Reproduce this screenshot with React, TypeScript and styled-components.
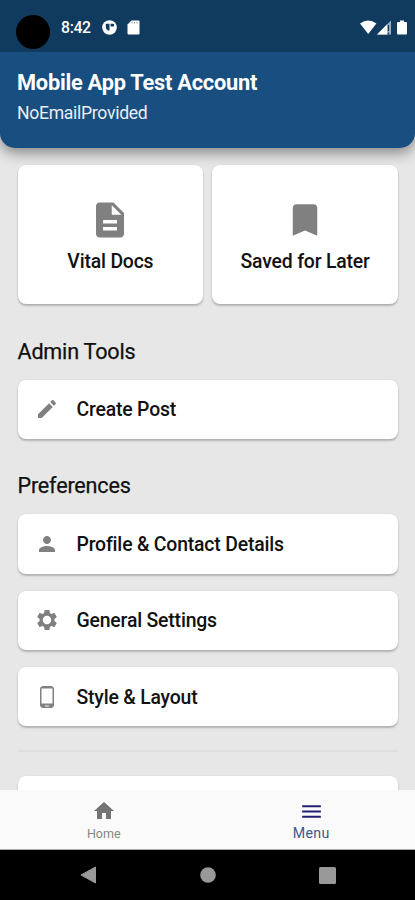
import React from "react";
import styled, { createGlobalStyle } from "styled-components";

const GlobalStyle = createGlobalStyle`
  * { box-sizing: border-box; }
  body { margin: 0; background: #e7e7e7; }
`;

const Screen = styled.div`
  width: 415px;
  height: 900px;
  display: flex;
  flex-direction: column;
  overflow: hidden;
  background: #e7e7e7;
  color: #111;
  font-family: Roboto, "Liberation Sans", sans-serif;
`;

const StatusBar = styled.div`
  flex: none;
  z-index: 2;
  height: 52px;
  display: flex;
  align-items: flex-start;
  padding: 15px 7px 0 16px;
  background: #113a5f;
  color: #fff;
`;

const Camera = styled.div`
  width: 34px;
  height: 34px;
  border-radius: 50%;
  background: #000;
`;

const Clock = styled.span`
  width: 41px;
  margin: 3px 0 0 11px;
  font-size: 15.8px;
  line-height: 20px;
  font-weight: 500;
  letter-spacing: -0.35px;
`;

const StatusIcons = styled.div<{ $gap: number; $end?: boolean }>`
  display: flex;
  align-items: center;
  gap: ${(p) => p.$gap}px;
  height: 16px;
  margin-top: 4px;
  margin-left: ${(p) => (p.$end ? "auto" : "0")};
`;

const Header = styled.header`
  flex: none;
  z-index: 1;
  height: 95.5px;
  padding: 18px 17px 0;
  border-radius: 0 0 15px 15px;
  background: #184e80;
  color: #fff;
  box-shadow: 0 5px 14px rgba(0, 0, 0, 0.42);
`;

const AccountName = styled.h1`
  margin: 0;
  font-size: 21.8px;
  line-height: 26px;
  font-weight: 700;
  letter-spacing: -0.25px;
`;

const AccountEmail = styled.p`
  margin: 6px 0 0;
  font-size: 17.6px;
  line-height: 22px;
  letter-spacing: -0.3px;
  color: #e9eff6;
`;

const Content = styled.main`
  flex: 1;
  min-height: 0;
  overflow: hidden;
  padding: 17.5px 17px 0 17.5px;
`;

const TileGrid = styled.div`
  display: grid;
  grid-template-columns: 1fr 1fr;
  gap: 9px;
`;

const Card = styled.div`
  border-radius: 8px;
  background: #fff;
  box-shadow: 0 2px 2px rgba(0, 0, 0, 0.22), 0 0 2px rgba(0, 0, 0, 0.08);
`;

const Tile = styled(Card)`
  height: 139px;
  display: flex;
  flex-direction: column;
  align-items: center;
  padding-top: 34px;
`;

const Label = styled.span`
  padding-top: 2px;
  font-size: 19.4px;
  line-height: 24px;
  font-weight: 500;
  letter-spacing: -0.18px;
`;

const TileLabel = styled(Label)`
  margin-top: 7px;
`;

const SectionTitle = styled.h2`
  height: 26px;
  margin: 34.5px 0 15px;
  font-size: 21.6px;
  line-height: 26px;
  font-weight: 400;
  letter-spacing: -0.2px;
  -webkit-text-stroke: 0.25px #111;
`;

const RowList = styled.div`
  display: flex;
  flex-direction: column;
  gap: 17px;
`;

const Row = styled(Card)`
  height: 59.3px;
  display: flex;
  align-items: center;
  gap: 17.5px;
  padding-left: 17.5px;
`;

const Divider = styled.hr`
  height: 2px;
  margin: 24px 0 24px;
  border: 0;
  background: #dfdfdf;
`;

const TabBar = styled.nav`
  flex: none;
  height: 60px;
  display: grid;
  grid-template-columns: 1fr 1fr;
  background: #fafafa;
  border-bottom: 1px solid #aaa;
  z-index: 1;
`;

const Tab = styled.div<{ $active?: boolean }>`
  display: flex;
  flex-direction: column;
  align-items: center;
  padding-top: 9px;
  color: ${(p) => (p.$active ? "#40568b" : "#858585")};
  font-size: ${(p) => (p.$active ? 14.2 : 12.5)}px;
  line-height: 18px;
`;

const TabLabel = styled.span<{ $active?: boolean }>`
  margin-top: ${(p) => (p.$active ? 0 : 2)}px;
  letter-spacing: ${(p) => (p.$active ? 0.3 : 0)}px;
`;

const SystemBar = styled.div`
  flex: none;
  height: 50px;
  display: flex;
  align-items: center;
  justify-content: center;
  gap: 103px;
  background: #000;
`;

const paths = {
  document:
    "M14 2H6c-1.1 0-1.99.9-1.99 2L4 20c0 1.1.89 2 1.99 2H18c1.1 0 2-.9 2-2V8l-6-6zm2 16H8v-2h8v2zm0-4H8v-2h8v2zm-3-5V3.500L18.500 9H13z",
  bookmark: "M17 3H7c-1.100 0-1.990.900-1.990 2L5 21l7-3 7 3V5c0-1.100-.900-2-2-2z",
  pencil:
    "M3 17.250V21h3.750L17.810 9.940l-3.750-3.750L3 17.250zM20.710 7.040c.390-.390.390-1.020 0-1.410l-2.340-2.340c-.390-.390-1.020-.390-1.410 0l-1.830 1.830 3.750 3.750 1.830-1.830z",
  person:
    "M12 12c2.210 0 4-1.790 4-4s-1.790-4-4-4-4 1.790-4 4 1.790 4 4 4zm0 2c-2.670 0-8 1.340-8 4v2h16v-2c0-2.660-5.330-4-8-4z",
  gear:
    "M19.430 12.980c.040-.320.070-.640.070-.980s-.030-.660-.070-.980l2.110-1.650c.190-.150.240-.420.120-.640l-2-3.460c-.120-.220-.390-.300-.610-.220l-2.490 1c-.520-.400-1.080-.730-1.690-.980l-.380-2.650C14.460 2.180 14.250 2 14 2h-4c-.250 0-.460.180-.490.420l-.380 2.650c-.610.250-1.170.590-1.690.980l-2.490-1c-.230-.090-.490 0-.610.220l-2 3.460c-.130.220-.070.490.120.640l2.110 1.650c-.040.320-.070.650-.070.980s.030.660.070.980l-2.110 1.650c-.190.150-.240.420-.120.640l2 3.460c.120.220.390.300.610.220l2.490-1c.520.400 1.080.730 1.690.980l.380 2.650c.030.240.240.420.490.420h4c.250 0 .460-.180.490-.420l.380-2.650c.610-.250 1.170-.590 1.690-.980l2.490 1c.230.090.490 0 .610-.220l2-3.460c.120-.220.070-.490-.120-.640l-2.110-1.650zM12 16.200a4.200 4.200 0 1 1 0-8.400a4.200 4.200 0 0 1 0 8.400z",
  phone:
    "M16 1H8C6.340 1 5 2.340 5 4v16c0 1.660 1.340 3 3 3h8c1.660 0 3-1.340 3-3V4c0-1.660-1.340-3-3-3zm-2 20.500h-4v-1h4v1zm3.500-3H6.500V3.500h11v15z",
  home: "M10 20v-6h4v6h5v-8h3L12 3 2 12h3v8z",
  menu: "M3 18h18v-2H3v2zm0-5h18v-2H3v2zm0-7v2h18V6H3z",
};

function Icon({ name, size, color = "#808080" }: { name: keyof typeof paths; size: number; color?: string }) {
  return (
    <svg width={size} height={size} viewBox="0 0 24 24" fill={color} aria-hidden="true">
      <path fillRule="evenodd" d={paths[name]} />
    </svg>
  );
}

const preferences: { icon: keyof typeof paths; label: string }[] = [
  { icon: "person", label: "Profile & Contact Details" },
  { icon: "gear", label: "General Settings" },
  { icon: "phone", label: "Style & Layout" },
];

export default function App() {
  return (
    <Screen>
      <GlobalStyle />
      <StatusBar>
        <Camera />
        <Clock>8:42</Clock>
        <StatusIcons $gap={10}>
          <svg width="15" height="15" viewBox="0 0 15 15">
            <circle cx="7.500" cy="7.500" r="7.300" fill="#fff" />
            <path d="M3.800 3.800h3.700v6.700H6A4 4 0 0 1 3.800 7zM8.600 3.800h2.200a1.300 1.300 0 0 1 0 2.800H8.600z" fill="#113a5f" />
          </svg>
          <svg width="13" height="15" viewBox="0 0 13 15">
            <path d="M4.500.5H11.500a1 1 0 0 1 1 1v12a1 1 0 0 1-1 1h-10a1 1 0 0 1-1-1v-9z" fill="#fff" />
            <path d="M5 2v1.500M7.500 2v1.500M10 2v1.500" stroke="#113a5f" strokeOpacity=".55" />
          </svg>
        </StatusIcons>
        <StatusIcons $gap={0} $end>
          <svg width="48" height="15" viewBox="0 0 48 15" fill="#fff">
            <path d="M0 3.500Q8.200-2.500 16.400 3.500L8.200 14z" />
            <path d="M17 14.500 31 .5v14z" fillOpacity=".6" />
            <path d="M17 14.500 27 4.500v10z" />
            <path d="M28.500 5v6M28.500 12.500v1.500" stroke="#113a5f" strokeWidth="1.200" />
            <path d="M40 .5h4V2h2q1 0 1 1v10.500q0 1-1 1h-8q-1 0-1-1V3q0-1 1-1h2z" />
          </svg>
        </StatusIcons>
      </StatusBar>
      <Header>
        <AccountName>Mobile App Test Account</AccountName>
        <AccountEmail>NoEmailProvided</AccountEmail>
      </Header>
      <Content>
        <TileGrid>
          <Tile>
            <Icon name="document" size={42} />
            <TileLabel>Vital Docs</TileLabel>
          </Tile>
          <Tile>
            <Icon name="bookmark" size={42} />
            <TileLabel>Saved for Later</TileLabel>
          </Tile>
        </TileGrid>
        <SectionTitle>Admin Tools</SectionTitle>
        <Row>
          <Icon name="pencil" size={24} />
          <Label>Create Post</Label>
        </Row>
        <SectionTitle>Preferences</SectionTitle>
        <RowList>
          {preferences.map((item) => (
            <Row key={item.label}>
              <Icon name={item.icon} size={24} />
              <Label>{item.label}</Label>
            </Row>
          ))}
        </RowList>
        <Divider />
        <Row />
      </Content>
      <TabBar>
        <Tab>
          <Icon name="home" size={24} color="#747474" />
          <TabLabel>Home</TabLabel>
        </Tab>
        <Tab $active>
          <Icon name="menu" size={25} color="#242071" />
          <TabLabel $active>Menu</TabLabel>
        </Tab>
      </TabBar>
      <SystemBar>
        <svg width="17" height="18" viewBox="0 0 17 18">
          <path d="M15.500 1v16L1 9z" fill="#999" stroke="#999" strokeLinejoin="round" />
        </svg>
        <svg width="16" height="16" viewBox="0 0 16 16">
          <circle cx="8" cy="8" r="7.800" fill="#999" />
        </svg>
        <svg width="17" height="17" viewBox="0 0 17 17">
          <rect width="17" height="17" rx="1.500" fill="#999" />
        </svg>
      </SystemBar>
    </Screen>
  );
}
